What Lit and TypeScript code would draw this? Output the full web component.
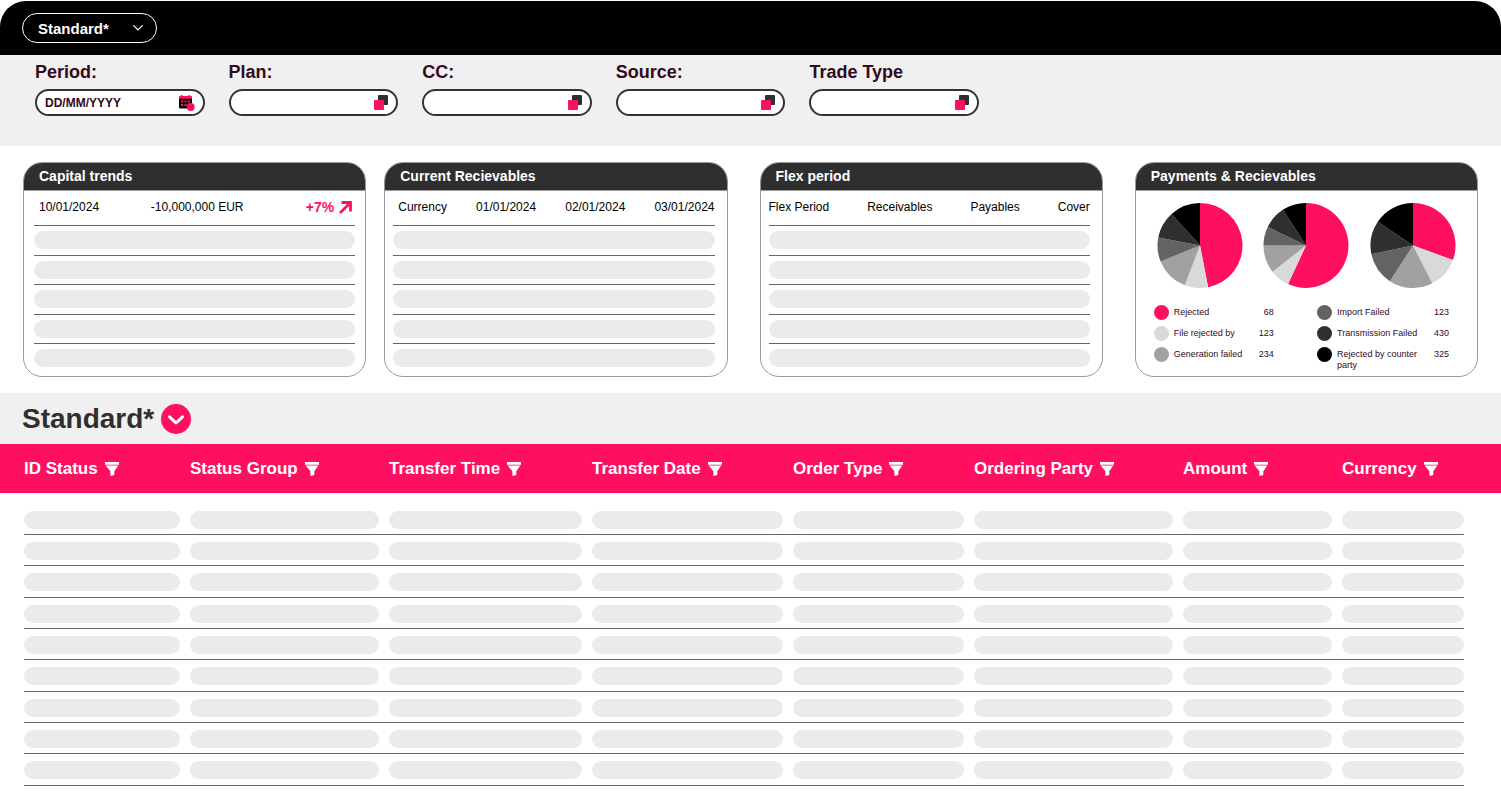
import { LitElement, html, css, svg } from "lit";
import { customElement, property } from "lit/decorators.js";

const PINK = "#ff0f5f";
const SLICE_COLORS = [PINK, "#d9d9d9", "#a1a1a1", "#636363", "#2f2f2f", "#000000"];

interface LegendItem {
  label: string;
  value: number;
  color: string;
}

const LEGEND: LegendItem[][] = [
  [
    { label: "Rejected", value: 68, color: SLICE_COLORS[0] },
    { label: "File rejected by", value: 123, color: SLICE_COLORS[1] },
    { label: "Generation failed", value: 234, color: SLICE_COLORS[2] },
  ],
  [
    { label: "Import Failed", value: 123, color: SLICE_COLORS[3] },
    { label: "Transmission Failed", value: 430, color: SLICE_COLORS[4] },
    { label: "Rejected by counter party", value: 325, color: SLICE_COLORS[5] },
  ],
];

// Each list holds the angle, clockwise from the top, at which a slice ends.
const PIES = [
  [169, 201, 248, 281, 318, 360],
  [205, 232, 270, 296, 327, 360],
  [110, 153, 213, 258, 304, 360],
];

const COLUMNS = [
  "ID Status",
  "Status Group",
  "Transfer Time",
  "Transfer Date",
  "Order Type",
  "Ordering Party",
  "Amount",
  "Currency",
];

const FILTERS = ["Plan:", "CC:", "Source:", "Trade Type"];

const range = (n: number) => Array.from({ length: n }, (_, i) => i);

const calendarIcon = html`<svg width="16" height="16" viewBox="0 0 16 16" aria-hidden="true">
  <path fill="#000" d="M0 3h13v10.500H.8L0 12.700z" />
  <path fill="${PINK}" d="M0 3.800V1.800Q0 1 .8 1h1V0h1.600v1h6V0H11v1h1.200q.8 0 .8.800v2z" />
  <path fill="${PINK}" d="M2 5.400h2.200v2.200H2zM5.500 5.400h2.200v2.200H5.500zM9 5.400h2.200v2.200H9zM2 8.900h2.200v2.200H2zM5.500 8.900h2.200v2.200H5.500z" />
  <circle cx="11.700" cy="12" r="3.900" fill="${PINK}" />
  <path d="M10.200 11.200l1.400 1.300 1.800-1" fill="none" stroke="#000" stroke-opacity=".55" stroke-width=".7" />
</svg>`;

const copyIcon = html`<svg width="14" height="15" viewBox="0 0 14 15" aria-hidden="true">
  <rect x="4" y="0" width="10" height="10" rx="1" fill="#2f2f2f" />
  <rect x="0" y="5" width="10" height="10" rx="1" fill="${PINK}" />
</svg>`;

const funnelIcon = html`<svg width="14" height="14" viewBox="0 0 14 14" aria-hidden="true">
  <path fill="#fff" d="M0 0h14v2.800H0zM.7 3.600h12.600L9.300 9.200v3.900L5.400 14V9.200z" />
</svg>`;

const trendIcon = html`<svg width="13" height="13" viewBox="0 0 13 13" aria-hidden="true">
  <path d="M1 12L10.500 2.500M2.500 1.500h9v9" fill="none" stroke="${PINK}" stroke-width="2.800" />
</svg>`;

@customElement("pie-chart")
export class PieChart extends LitElement {
  static styles = css`
    :host { display: block; width: 86px; height: 85px; }
    .chart { display: block; width: 100%; height: 100%; }
  `;

  @property({ attribute: false }) ends: number[] = [];

  private slice(from: number, to: number, color: string) {
    const point = (deg: number) => {
      const a = (deg * Math.PI) / 180;
      return `${(43 + 42.5 * Math.sin(a)).toFixed(2)} ${(42.5 - 42.5 * Math.cos(a)).toFixed(2)}`;
    };
    const large = to - from > 180 ? 1 : 0;
    return svg`<path fill=${color} d="M43 42.5L${point(from)}A42.5 42.5 0 ${large} 1 ${point(to)}Z" />`;
  }

  render() {
    return html`<svg class="chart" viewBox="0 0 86 85" aria-hidden="true">
      ${this.ends.map((end, i) => this.slice(i ? this.ends[i - 1] : 0, end, SLICE_COLORS[i]))}
    </svg>`;
  }
}

@customElement("app-root")
export class AppRoot extends LitElement {
  static styles = css`
    :host {
      display: block;
      background: #fff;
      color: #000;
      font-family: "Liberation Sans", Arial, Helvetica, sans-serif;
      font-size: 12px;
    }
    *, *::before { box-sizing: border-box; }
    svg { display: block; flex: none; }
    button, input, select { font: inherit; color: inherit; margin: 0; }
    button { border: 0; padding: 0; background: none; cursor: pointer; }
    h1, h2, ul { margin: 0; padding: 0; }

    .topbar {
      display: flex;
      align-items: center;
      height: 54px;
      margin-top: 1px;
      padding: 0 22px;
      border-radius: 26px 26px 0 0;
      background: #000;
    }
    .view { display: grid; align-items: center; width: 135px; color: #fff; }
    .view > * { grid-area: 1 / 1; }
    .view-select {
      appearance: none;
      width: 100%;
      height: 30px;
      padding: 0 32px 0 15px;
      border: 1px solid #fff;
      border-radius: 15px;
      background: #000;
      font-size: 15px;
      font-weight: 700;
    }
    .view-chevron { justify-self: end; margin-right: 14px; pointer-events: none; }

    .filters { padding: 6px 35px 30px; background: #f0f0f0; }
    .filter-list {
      display: grid;
      grid-template-columns: repeat(5, 1fr);
      gap: 24px;
      max-width: 944px;
    }
    .filter { display: flex; flex-direction: column; gap: 6px; min-width: 0; }
    .filter-label { color: #330a1c; font-size: 18px; font-weight: 700; line-height: 22px; }
    .field {
      display: flex;
      align-items: center;
      height: 27px;
      padding: 0 8px;
      border: 2px solid #333;
      border-radius: 14px;
      background: #fff;
    }
    .field-input {
      flex: 1;
      min-width: 0;
      padding: 0;
      border: 0;
      outline: 0;
      background: none;
      color: #330a1c;
      font-weight: 700;
    }
    .field-input::placeholder { color: #330a1c; opacity: 1; }

    .cards { display: flex; gap: 18px; padding: 16px 23px; }
    .card {
      flex: 1 1 0;
      min-width: 0;
      border: 1px solid #9b9b9b;
      border-radius: 19px;
      overflow: hidden;
      padding-bottom: 9px;
    }
    .card.spaced { margin-left: 14px; }
    .card.charts { padding-bottom: 5px; }
    .card-title {
      padding: 0 15px;
      border-bottom: 1px solid #9b9b9b;
      background: #2f2f2f;
      color: #fff;
      font-size: 14px;
      font-weight: 700;
      line-height: 27px;
    }
    .mini, .mini thead, .mini tbody { display: block; }
    .mini { padding: 0 12px 0 8px; }
    .mini.even { padding: 0 10px; }
    .mini-head {
      display: flex;
      justify-content: space-between;
      padding-left: 5px;
      height: 34px;
      line-height: 33px;
      white-space: nowrap;
    }
    .mini-head.flush { padding-left: 0; }
    .mini-head th, .mini-head td { padding: 0; font-weight: 400; }
    .mini-head .trend {
      display: flex;
      align-items: center;
      justify-content: flex-end;
      gap: 5px;
      min-width: 60px;
      height: 33px;
      padding-right: 3px;
      color: #ff0f5f;
      font-size: 14px;
      font-weight: 700;
    }
    .mini-row { display: block; height: 29px; border-top: 1px solid #666; }
    .mini-row:nth-child(odd) { height: 30px; }
    .mini-row:last-child { height: 24px; }
    .mini-cell { display: block; padding: 5px 0 0; }
    .bar { display: block; height: 18px; border-radius: 9px; background: #ebebeb; }

    .pies { display: flex; justify-content: space-between; padding: 12px 21px 0; }
    .legend {
      display: flex;
      justify-content: space-between;
      padding: 17px 28px 0 18px;
      color: #330a1c;
      font-size: 9px;
      line-height: 11px;
    }
    .legend-list { display: flex; flex-direction: column; gap: 6px; width: 120px; list-style: none; }
    .legend-list.wide { width: 132px; }
    .legend-item { display: grid; grid-template-columns: 15px 1fr auto; gap: 5px; }
    .legend-text { padding-top: 2px; }
    .dot { width: 15px; height: 15px; border-radius: 50%; }

    .heading {
      display: flex;
      align-items: center;
      gap: 7px;
      height: 51px;
      padding: 0 22px;
      background: #f0f0f0;
    }
    .heading-title { color: #2f2f2f; font-size: 28px; font-weight: 700; line-height: 32px; }

    .data, .data thead, .data tbody { display: block; }
    .data thead { padding: 0 37px 0 24px; background: #ff0f5f; }
    .data tbody { padding: 11px 37px 24px 24px; }
    .data-row {
      display: grid;
      grid-template-columns: 156fr 189fr 193fr 191fr 171fr 199fr 149fr 122fr;
      column-gap: 10px;
    }
    .data-head {
      display: flex;
      align-items: center;
      gap: 7px;
      height: 49px;
      padding: 0;
      color: #fff;
      font-size: 17px;
      font-weight: 700;
      white-space: nowrap;
    }
    .data tbody .data-row { height: 31px; padding-top: 7px; border-bottom: 1px solid #666; }
    .data tbody .data-row:nth-child(3n) { height: 32px; }
    .data-cell { padding: 0; }
  `;

  private emptyRows(count: number, span: number) {
    return range(count).map(
      () => html`<tr class="mini-row"><td class="mini-cell" colspan=${span}><span class="bar"></span></td></tr>`
    );
  }

  private tableCard(title: string, heads: string[], spaced: boolean) {
    return html`<section class="card ${spaced ? "spaced" : ""}">
      <h2 class="card-title">${title}</h2>
      <table class="mini">
        <thead>
          <tr class="mini-head ${spaced ? "flush" : ""}">${heads.map((h) => html`<th scope="col">${h}</th>`)}</tr>
        </thead>
        <tbody>${this.emptyRows(5, heads.length)}</tbody>
      </table>
    </section>`;
  }

  render() {
    return html`
      <header class="topbar">
        <div class="view">
          <select class="view-select" aria-label="View">
            <option>Standard*</option>
          </select>
          <svg class="view-chevron" width="10" height="6" viewBox="0 0 10 6" aria-hidden="true">
            <path d="M.7.700L5 5 9.300.700" fill="none" stroke="#fff" stroke-width="1.200" stroke-linecap="round" />
          </svg>
        </div>
      </header>

      <form class="filters">
        <div class="filter-list">
          <div class="filter">
            <label class="filter-label" for="period">Period:</label>
            <div class="field">
              <input class="field-input" id="period" type="text" placeholder="DD/MM/YYYY" />
              <button type="button" aria-label="Open calendar">${calendarIcon}</button>
            </div>
          </div>
          ${FILTERS.map(
            (name, i) => html`<div class="filter">
              <label class="filter-label" for="filter-${i}">${name}</label>
              <div class="field">
                <input class="field-input" id="filter-${i}" type="text" />
                <button type="button" aria-label="Choose values">${copyIcon}</button>
              </div>
            </div>`
          )}
        </div>
      </form>

      <div class="cards">
        <section class="card">
          <h2 class="card-title">Capital trends</h2>
          <table class="mini even">
            <thead>
              <tr class="mini-head">
                <td>10/01/2024</td>
                <td>-10,000,000 EUR</td>
                <td class="trend">+7% ${trendIcon}</td>
              </tr>
            </thead>
            <tbody>${this.emptyRows(5, 3)}</tbody>
          </table>
        </section>
        ${this.tableCard("Current Recievables", ["Currency", "01/01/2024", "02/01/2024", "03/01/2024"], false)}
        ${this.tableCard("Flex period", ["Flex Period", "Receivables", "Payables", "Cover"], true)}
        <section class="card spaced charts">
          <h2 class="card-title">Payments &amp; Recievables</h2>
          <div class="pies">${PIES.map((ends) => html`<pie-chart .ends=${ends}></pie-chart>`)}</div>
          <div class="legend">
            ${LEGEND.map(
              (items, i) => html`<ul class="legend-list ${i ? "wide" : ""}">
                ${items.map(
                  (item) => html`<li class="legend-item">
                    <span class="dot" style="background:${item.color}"></span>
                    <span class="legend-text">${item.label}</span>
                    <span class="legend-text">${item.value}</span>
                  </li>`
                )}
              </ul>`
            )}
          </div>
        </section>
      </div>

      <div class="heading">
        <h1 class="heading-title">Standard*</h1>
        <button type="button" aria-label="Change view">
          <svg width="30" height="30" viewBox="0 0 30 30" aria-hidden="true">
            <circle cx="15" cy="15" r="15" fill="${PINK}" />
            <path d="M8.500 12.800L15 19l6.500-6.200" fill="none" stroke="#fff" stroke-width="3" stroke-linecap="round" stroke-linejoin="round" />
          </svg>
        </button>
      </div>

      <table class="data">
        <thead>
          <tr class="data-row">
            ${COLUMNS.map(
              (name) => html`<th class="data-head" scope="col">
                ${name}<button type="button" aria-label="Filter ${name}">${funnelIcon}</button>
              </th>`
            )}
          </tr>
        </thead>
        <tbody>
          ${range(9).map(
            () => html`<tr class="data-row">
              ${COLUMNS.map(() => html`<td class="data-cell"><span class="bar"></span></td>`)}
            </tr>`
          )}
        </tbody>
      </table>
    `;
  }
}
